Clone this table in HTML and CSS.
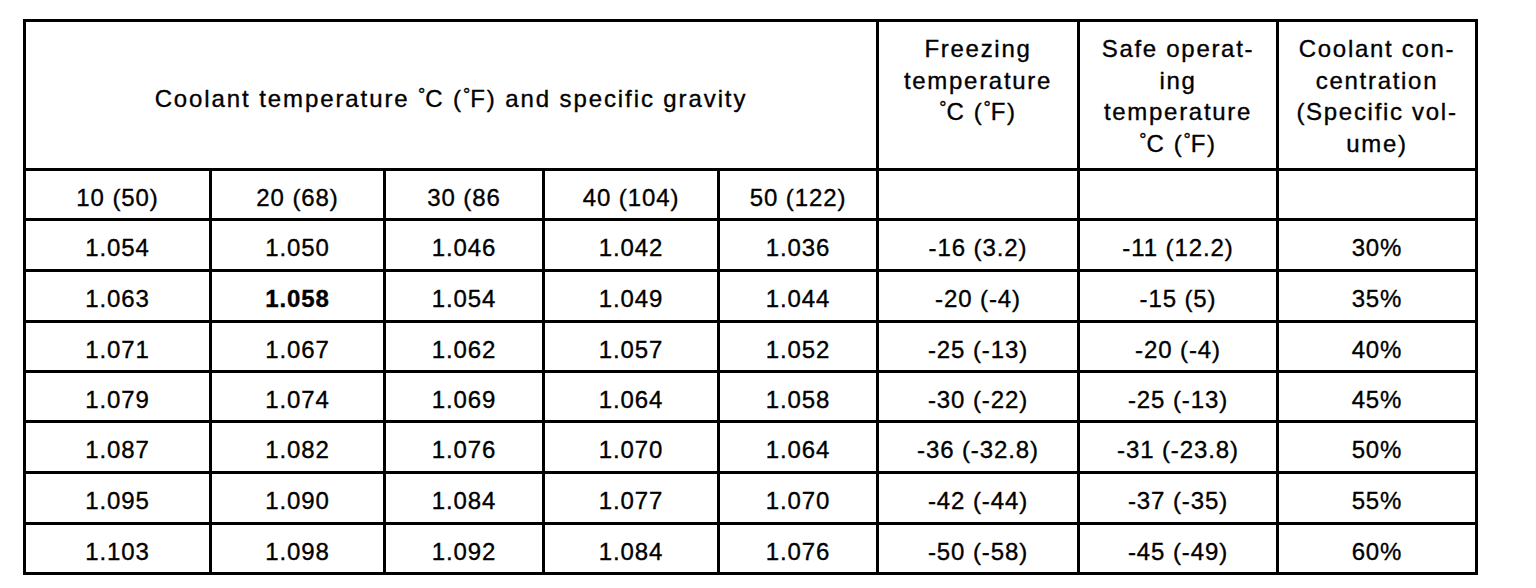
FILE: index.html
```html
<!DOCTYPE html>
<html lang="en">
<head>
<meta charset="utf-8">
<title>Coolant concentration table</title>
<link rel="stylesheet" href="styles.css">
</head>
<body>
<table class="coolant">
  <colgroup>
    <col class="c1"><col class="c2"><col class="c3"><col class="c4"><col class="c5">
    <col class="c6"><col class="c7"><col class="c8">
  </colgroup>
  <thead>
    <tr class="head">
      <th colspan="5" class="title">Coolant temperature <span class="deg">°</span>C (<span class="deg">°</span>F) and specific gravity</th>
      <th class="multi">Freezing<br>temperature<br><span class="deg">°</span>C (<span class="deg">°</span>F)</th>
      <th class="multi">Safe operat-<br>ing<br>temperature<br><span class="deg">°</span>C (<span class="deg">°</span>F)</th>
      <th class="multi">Coolant con-<br>centration<br>(Specific vol-<br>ume)</th>
    </tr>
    <tr class="sub">
      <th>10 (50)</th><th>20 (68)</th><th>30 (86</th><th>40 (104)</th><th>50 (122)</th>
      <th></th><th></th><th></th>
    </tr>
  </thead>
  <tbody>
    <tr class="r51"><td>1.054</td><td>1.050</td><td>1.046</td><td>1.042</td><td>1.036</td><td>-16 (3.2)</td><td>-11 (12.2)</td><td>30%</td></tr>
    <tr class="r51"><td>1.063</td><td class="bold">1.058</td><td>1.054</td><td>1.049</td><td>1.044</td><td>-20 (-4)</td><td>-15 (5)</td><td>35%</td></tr>
    <tr class="r50"><td>1.071</td><td>1.067</td><td>1.062</td><td>1.057</td><td>1.052</td><td>-25 (-13)</td><td>-20 (-4)</td><td>40%</td></tr>
    <tr class="r50"><td>1.079</td><td>1.074</td><td>1.069</td><td>1.064</td><td>1.058</td><td>-30 (-22)</td><td>-25 (-13)</td><td>45%</td></tr>
    <tr class="r51"><td>1.087</td><td>1.082</td><td>1.076</td><td>1.070</td><td>1.064</td><td>-36 (-32.8)</td><td>-31 (-23.8)</td><td>50%</td></tr>
    <tr class="r51"><td>1.095</td><td>1.090</td><td>1.084</td><td>1.077</td><td>1.070</td><td>-42 (-44)</td><td>-37 (-35)</td><td>55%</td></tr>
    <tr class="r50"><td>1.103</td><td>1.098</td><td>1.092</td><td>1.084</td><td>1.076</td><td>-50 (-58)</td><td>-45 (-49)</td><td>60%</td></tr>
  </tbody>
</table>
</body>
</html>
```
FILE: styles.css
```css
html, body {
  margin: 0;
  padding: 0;
  background: #fff;
}

body {
  padding: 19px 0 0 23px;
  font-family: "Liberation Sans", Arial, sans-serif;
  color: #000;
}

.coolant {
  border-collapse: collapse;
  table-layout: fixed;
  width: 1452px;
  font-size: 24px;
  letter-spacing: 0.9px;
  -webkit-text-stroke: 0.35px #000;
}

.c1 { width: 186px; }
.c2 { width: 174px; }
.c3 { width: 159px; }
.c4 { width: 175px; }
.c5 { width: 159px; }
.c6 { width: 201px; }
.c7 { width: 199px; }
.c8 { width: 199px; }

.coolant th,
.coolant td {
  border: 3px solid #000;
  padding: 6px 0 0;
  text-align: center;
  font-weight: normal;
  vertical-align: middle;
  line-height: 31.7px;
}

.head { height: 149px; }
.sub { height: 50px; }
.r51 { height: 51px; }
.r50 { height: 50px; }

.coolant th.title {
  padding-top: 8px;
  letter-spacing: 1.9px;
}

.coolant th.multi {
  vertical-align: top;
  padding-top: 11px;
  letter-spacing: 1.7px;
}

.deg {
  font-size: 0.75em;
  vertical-align: 0.35em;
  line-height: 0;
  letter-spacing: 0;
}

.coolant td.bold {
  font-weight: bold;
}
```
